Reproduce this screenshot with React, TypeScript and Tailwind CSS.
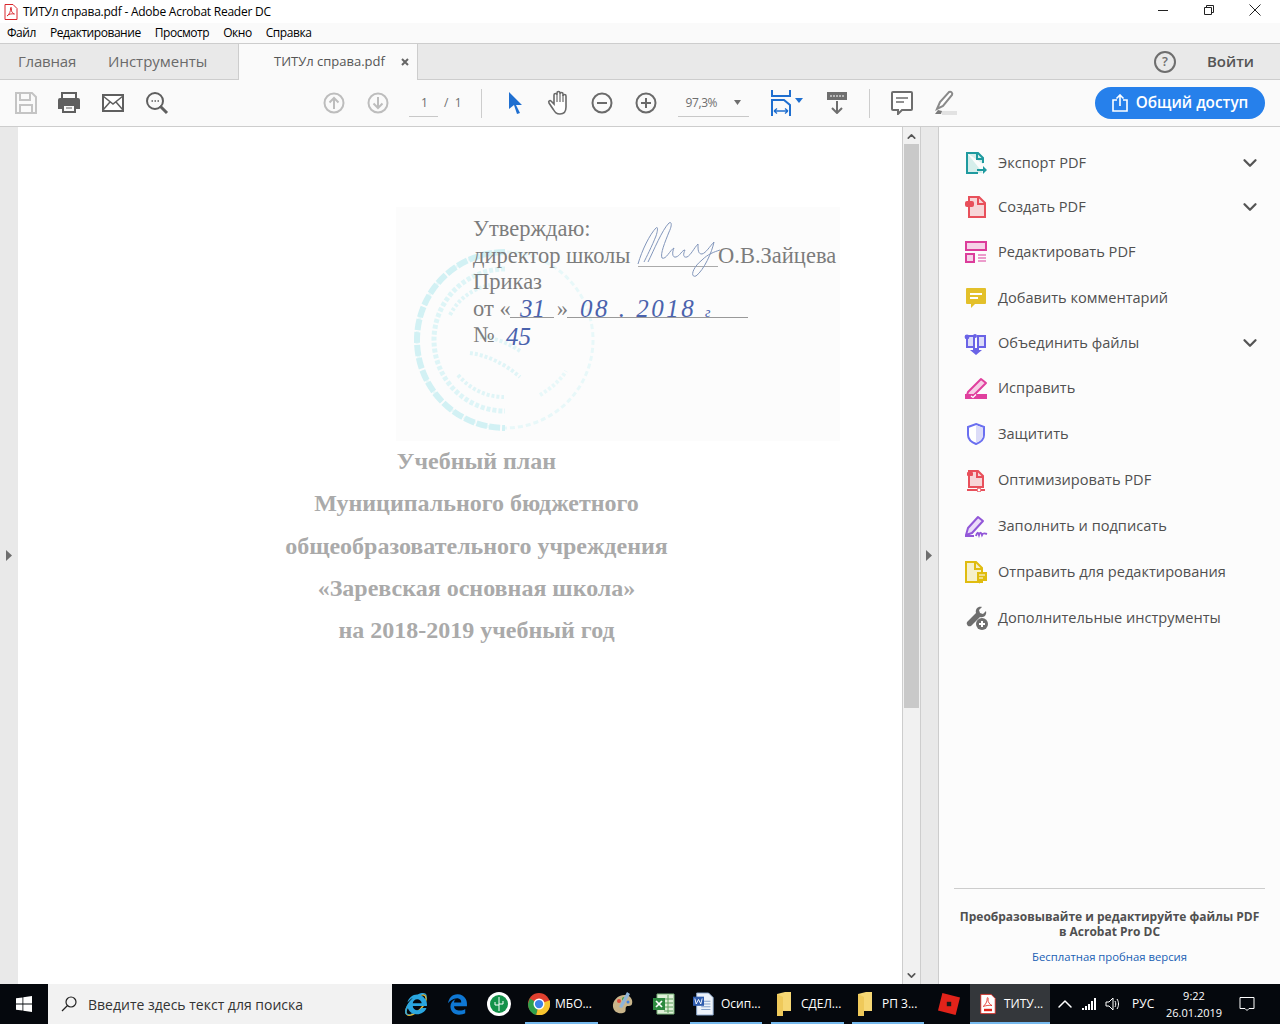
import { ChevronDown, ChevronUp } from 'lucide-react';
import { FaInternetExplorer, FaEdgeLegacy } from 'react-icons/fa';
import type { ReactNode } from 'react';

const uiFont = "font-['Open_Sans','Noto_Sans',sans-serif]";

function Ico({ children, w = 24, h = 24, className = '' }: { children: ReactNode; w?: number; h?: number; className?: string }) {
    return (
        <svg width={w} height={h} viewBox={`0 0 ${w} ${h}`} fill="none" className={className}>
            {children}
        </svg>
    );
}

const toolIcons: Record<string, ReactNode> = {
    export: (
        <Ico>
            <path d="M3 2h11l5 5v6M19 22H3V2" fill="#d6eeeb" />
            <path d="M14 22H3V2h11l5 5v5" stroke="#1f9a9f" strokeWidth="2" />
            <path d="M13 2v6h6" stroke="#1f9a9f" strokeWidth="2" />
            <path d="M13 18h6v-3l4 4-4 4v-3h-6z" fill="#1f9a9f" />
        </Ico>
    ),
    create: (
        <Ico>
            <path d="M5 7V2h10l6 6v14H5z" fill="#f7d6d8" stroke="#e8505b" strokeWidth="2" />
            <path d="M14 2v7h7" stroke="#e8505b" strokeWidth="2" />
            <rect x="1" y="6" width="9" height="6" rx="2" fill="#e8505b" />
        </Ico>
    ),
    edit: (
        <Ico>
            <rect x="2" y="2" width="20" height="8" fill="#f6d2e8" stroke="#dc3d9b" strokeWidth="2" />
            <rect x="2" y="14" width="8" height="8" fill="#f6d2e8" stroke="#dc3d9b" strokeWidth="2" />
            <path d="M14 15h8M14 18h8M14 21h8" stroke="#dc3d9b" strokeWidth="1.2" />
        </Ico>
    ),
    comment: (
        <Ico>
            <path d="M3 2h18a1 1 0 0 1 1 1v14a1 1 0 0 1-1 1H11l-4 4v-4H3a1 1 0 0 1-1-1V3a1 1 0 0 1 1-1z" fill="#e3c02a" />
            <path d="M6 8h12M6 12h8" stroke="#fff" strokeWidth="2" />
        </Ico>
    ),
    combine: (
        <Ico>
            <path d="M3 5h7v11H3zM14 5h7v11h-7z" fill="#dcdcf8" stroke="#6a63e6" strokeWidth="2" />
            <circle cx="3" cy="6" r="2.4" fill="#6a63e6" />
            <circle cx="11" cy="5" r="2" fill="#6a63e6" />
            <path d="M9 17h6v2h3l-6 5-6-5h3z" fill="#6a63e6" />
        </Ico>
    ),
    fix: (
        <Ico>
            <path d="M2 22l2-6L17 3l5 4L9 20z" fill="#f7cfe6" stroke="#e0409e" strokeWidth="2" strokeLinejoin="round" />
            <path d="M1 18h22v5H1z" fill="#e0409e" />
            <path d="M7 20l2 1.5 3-3" stroke="#fff" strokeWidth="1.3" />
        </Ico>
    ),
    protect: (
        <Ico>
            <path d="M12 2l8 3v8c0 4-3 7-8 9-5-2-8-5-8-9V5z" fill="#fff" stroke="#6a6ff0" strokeWidth="2" />
            <path d="M12 3l7 3v7c0 4-3 6-7 8z" fill="#dcdcf8" />
        </Ico>
    ),
    optimize: (
        <Ico>
            <path d="M5 3h9l5 5v11H5z" fill="#f7d6d8" stroke="#e8505b" strokeWidth="2" />
            <path d="M13 3v6h6" stroke="#e8505b" strokeWidth="2" />
            <rect x="3" y="4" width="6" height="4" rx="1" fill="#e8505b" />
            <path d="M3 22h18" stroke="#e8505b" strokeWidth="2" />
            <circle cx="15" cy="22" r="2" fill="#fff" stroke="#e8505b" />
        </Ico>
    ),
    sign: (
        <Ico>
            <path d="M2 21l2-7L14 3l5 4L8 19z" fill="#ebdcf9" stroke="#9257d8" strokeWidth="2" strokeLinejoin="round" />
            <path d="M1 22h9M12 22c1-4 2-4 3-1 1-3 2-3 3 0 1-2 2-2 5-1" stroke="#9257d8" strokeWidth="2" />
        </Ico>
    ),
    send: (
        <Ico>
            <path d="M2 2h10l6 6v14H2z" fill="#f6f0cc" stroke="#e0bc10" strokeWidth="2" />
            <path d="M11 2v7h7" stroke="#e0bc10" strokeWidth="2" />
            <path d="M13 12h10v9h-6l-2 3v-3h-2z" fill="#e0bc10" />
            <path d="M15 15h6M15 18h4" stroke="#fff" />
        </Ico>
    ),
    more: (
        <Ico>
            <path d="M18 1l-3 3 1 3 3 1 3-3c1 4-2 7-6 6L7 20a3 3 0 0 1-4-4l9-9c-1-4 2-7 6-6z" fill="#6e6e6e" />
            <circle cx="18" cy="18" r="6" fill="#6e6e6e" />
            <path d="M18 15v6M15 18h6" stroke="#fff" strokeWidth="2" />
        </Ico>
    ),
};

const tools = [
    { key: 'export', label: 'Экспорт PDF', expand: true, h: 'h-[44px]' },
    { key: 'create', label: 'Создать PDF', expand: true, h: 'h-[44px]' },
    { key: 'edit', label: 'Редактировать PDF', h: 'h-[46px]' },
    { key: 'comment', label: 'Добавить комментарий', h: 'h-[46px]' },
    { key: 'combine', label: 'Объединить файлы', expand: true, h: 'h-[44px]' },
    { key: 'fix', label: 'Исправить', h: 'h-[46px]' },
    { key: 'protect', label: 'Защитить', h: 'h-[46px]' },
    { key: 'optimize', label: 'Оптимизировать PDF', h: 'h-[46px]' },
    { key: 'sign', label: 'Заполнить и подписать', h: 'h-[46px]' },
    { key: 'send', label: 'Отправить для редактирования', h: 'h-[46px]' },
    { key: 'more', label: 'Дополнительные инструменты', h: 'h-[46px]' },
];

function TitleBar() {
    return (
        <div className="h-[23px] bg-white flex items-center pl-[4px] text-[12px] text-black">
            <svg width="14" height="16" viewBox="0 0 14 16" fill="none">
                <path d="M1 .5h8l4 4v11H1z" fill="#fff" stroke="#d9262c" />
                <path d="M3 12c2-1 4-5 3.500-8 0-1 1.500-1 1 1-.5 3 1 4 3 5-3-.5-6 0-7.500 2z" stroke="#d9262c" strokeWidth=".9" />
            </svg>
            <span className="ml-[5px] tracking-[-0.24px]">ТИТУл справа.pdf - Adobe Acrobat Reader DC</span>
            <div className="ml-auto mr-[2px] mb-[3px] flex items-center text-[#222]">
                <div className="w-[46px] flex justify-center">
                    <svg width="10" height="10"><path d="M0 5.500h10" stroke="#222" /></svg>
                </div>
                <div className="w-[46px] flex justify-center">
                    <svg width="10" height="10" fill="none" stroke="#222"><path d="M.5 2.500h7v7h-7zM2.500 2.500v-2h7v7h-2" /></svg>
                </div>
                <div className="w-[46px] flex justify-center">
                    <svg width="12" height="12" stroke="#222"><path d="M.5.500l11 11M11.500.500l-11 11" /></svg>
                </div>
            </div>
        </div>
    );
}

function MenuBar() {
    return (
        <div className="h-[20px] bg-[#fafafa] flex items-center pl-[7px] gap-[14px] text-[12px] tracking-[-0.45px] text-black">
            <span>Файл</span>
            <span>Редактирование</span>
            <span>Просмотр</span>
            <span>Окно</span>
            <span>Справка</span>
        </div>
    );
}

function TabBar() {
    return (
        <div className="h-[37px] bg-[#e9e9e9] border-y border-[#cdcdcd] flex text-[15px] text-[#6a6a6a] items-stretch">
            <div className="w-[90px] pl-[18px] flex items-center tracking-[-0.2px]">Главная</div>
            <div className="w-[131px] pl-[18px] flex items-center">Инструменты</div>
            <div className="w-[180px] ml-[17px] bg-[#fafafa] border-x border-[#cdcdcd] -mb-px flex items-center pl-[35px] pr-[8px] text-[13px] text-[#555]">
                <span>ТИТУл справа.pdf</span>
                <svg width="8" height="8" className="ml-auto" stroke="#666" strokeWidth="2"><path d="M1 1l6 6M7 1l-6 6" /></svg>
            </div>
            <div className="ml-auto flex items-center">
                <div className="w-[22px] h-[22px] rounded-full border-2 border-[#6e6e6e] flex items-center justify-center text-[13px] font-semibold text-[#6e6e6e]">?</div>
                <span className="ml-[31px] mr-[26px] font-semibold text-[#555]">Войти</span>
            </div>
        </div>
    );
}

function Toolbar() {
    return (
        <div className="h-[47px] bg-[#fafafa] border-b border-[#cdcdcd] flex items-center pl-[15px] text-[#6e6e6e]">
            <Ico w={22} h={22}>
                <path d="M1 1h16l4 4v16H1z" stroke="#c4c4c4" strokeWidth="2" />
                <path d="M5 2v6h10V2M5 20v-7h12v7" stroke="#c4c4c4" strokeWidth="2" />
            </Ico>
            <Ico w={24} h={22} className="ml-[20px]">
                <path d="M5 6V1h14v5" stroke="#5f5f5f" strokeWidth="2" />
                <path d="M3 6h18a2 2 0 0 1 2 2v9h-4v4H5v-4H1V8a2 2 0 0 1 2-2z" fill="#5f5f5f" />
                <path d="M7 14h10v5H7z" fill="#fafafa" />
                <path d="M9 16h6" stroke="#5f5f5f" />
            </Ico>
            <Ico w={22} h={18} className="ml-[21px]">
                <rect x="1" y="1" width="20" height="16" fill="#fff" stroke="#5f5f5f" strokeWidth="2" />
                <path d="M1 2l10 8 10-8M1 16l7-8M21 16l-7-8" stroke="#5f5f5f" strokeWidth="1.500" />
            </Ico>
            <Ico w={24} h={24} className="ml-[21px]">
                <circle cx="10" cy="10" r="8" stroke="#5f5f5f" strokeWidth="2" />
                <path d="M15 15l7 7" stroke="#5f5f5f" strokeWidth="3" />
                <path d="M6.500 10h1.500M9.500 10h1.500M12.500 10h1.500" stroke="#5f5f5f" strokeWidth="1.500" />
            </Ico>
            <Ico w={22} h={22} className="ml-[154px]">
                <circle cx="11" cy="11" r="9.500" stroke="#bdbdbd" strokeWidth="2" />
                <path d="M11 17V6M6.500 10.500L11 6l4.500 4.500" stroke="#bdbdbd" strokeWidth="2" />
            </Ico>
            <Ico w={22} h={22} className="ml-[22px]">
                <circle cx="11" cy="11" r="9.500" stroke="#bdbdbd" strokeWidth="2" />
                <path d="M11 5v11M6.500 11.500L11 16l4.500-4.500" stroke="#bdbdbd" strokeWidth="2" />
            </Ico>
            <div className="ml-[20px] w-[29px] h-[27px] border-b border-[#c8c8c8] flex items-center justify-center text-[12px] pl-[2px]">1</div>
            <span className="ml-[6px] text-[12px]">/&nbsp;&nbsp;1</span>
            <div className="ml-[19px] w-px h-[29px] bg-[#cdcdcd]" />
            <Ico w={16} h={22} className="ml-[25px]">
                <path d="M2 0l13 13H9l4 8-3 1-3-9-5 4z" fill="#1f6fd0" />
            </Ico>
            <Ico w={24} h={26} className="ml-[24px]">
                <path d="M6 19l-4-6c-1-2 1-3 2-2l3 3V5c0-2 3-2 3 0V3c0-2 3-2 3 0v1c0-2 3-2 3 0v2c0-2 3-2 3 0v11c0 4-2 7-6 7s-5-2-7-5z" fill="#fff" stroke="#6a6a6a" strokeWidth="1.600" />
                <path d="M10 5v7M13 4v8M16 5v7" stroke="#6a6a6a" strokeWidth="1.200" />
            </Ico>
            <Ico w={22} h={22} className="ml-[20px]">
                <circle cx="11" cy="11" r="9.500" stroke="#6a6a6a" strokeWidth="2" />
                <path d="M6 11h10" stroke="#6a6a6a" strokeWidth="2" />
            </Ico>
            <Ico w={22} h={22} className="ml-[22px]">
                <circle cx="11" cy="11" r="9.500" stroke="#6a6a6a" strokeWidth="2" />
                <path d="M6 11h10M11 6v10" stroke="#6a6a6a" strokeWidth="2" />
            </Ico>
            <div className="ml-[21px] w-[71px] h-[27px] border-b border-[#c8c8c8] flex items-center pl-[8px] text-[12px] tracking-[-0.4px]">
                97,3%
                <svg width="7" height="5" className="ml-auto mr-[8px]"><path d="M0 0h7L3.500 5z" fill="#6e6e6e" /></svg>
            </div>
            <Ico w={34} h={26} className="ml-[22px]">
                <path d="M1 0v6h18V0" stroke="#1f6fd0" strokeWidth="2" />
                <path d="M1 26V10h12l6 5v11" stroke="#1f6fd0" strokeWidth="2" />
                <path d="M3 21h14M3 21l3-2.500M3 21l3 2.500M17 21l-3-2.500M17 21l-3 2.500" stroke="#1f6fd0" strokeWidth="1.300" />
                <path d="M24 8h8l-4 5z" fill="#1f6fd0" />
            </Ico>
            <Ico w={24} h={22} className="ml-[20px]">
                <path d="M2 0h20v8H2z" fill="#6e6e6e" />
                <path d="M6 3v2M9 3v2M12 3v2M15 3v2M18 3v2" stroke="#fff" />
                <path d="M12 9v12M7 16l5 5 5-5" stroke="#6e6e6e" strokeWidth="2" />
            </Ico>
            <div className="ml-[20px] w-px h-[29px] bg-[#cdcdcd]" />
            <Ico w={22} h={24} className="ml-[21px]">
                <path d="M2 1h18a1 1 0 0 1 1 1v16a1 1 0 0 1-1 1h-9l-4 4v-4H2a1 1 0 0 1-1-1V2a1 1 0 0 1 1-1z" fill="#fff" stroke="#6e6e6e" strokeWidth="2" />
                <path d="M5 7h12M5 11h8" stroke="#6e6e6e" strokeWidth="1.500" />
            </Ico>
            <Ico w={26} h={26} className="ml-[20px]">
                <path d="M4 19l3-7L16 2c2-1 4 1 3 3l-9 11z" fill="#fff" stroke="#8a8a8a" strokeWidth="2" />
                <path d="M2 24l3-4 4 1-1 3z" fill="#7a7a7a" />
                <path d="M9 21h15v4H9z" fill="#e2e2e2" />
            </Ico>
            <button className="ml-auto mr-[15px] w-[170px] h-[32px] rounded-full bg-[#2680eb] text-white flex items-center justify-center font-semibold text-[15.300px]">
                <svg width="16" height="18" viewBox="0 0 16 18" fill="none" stroke="#fff" strokeWidth="1.600" className="mr-[8px]">
                    <path d="M5 6H1v11h14V6h-4M8 12V1M4.500 4.500L8 1l3.500 3.500" />
                </svg>
                <span className="-mt-[2px]">Общий доступ</span>
            </button>
        </div>
    );
}

function DocumentPage() {
    return (
        <div className="w-[884px] bg-white relative">
            <div className="absolute left-[378px] top-[80px] w-[444px] h-[234px] bg-[#fcfcfc]">
                <svg width="200" height="200" viewBox="0 0 200 200" className="absolute left-[14px] top-[38px]" fill="none">
                    <circle cx="95" cy="95" r="88" stroke="#e8f8f9" strokeWidth="3" strokeDasharray="5 3" />
                    <path d="M95 7A88 88 0 0 0 95 183" stroke="#d2f1f4" strokeWidth="6" strokeDasharray="11 2" />
                    <path d="M95 24A71 71 0 0 0 95 166" stroke="#def5f7" strokeWidth="5" strokeDasharray="4 2" />
                    <path d="M40 70c8-16 22-26 40-30M60 108c16 2 34 10 50 24M70 92c14 0 28 6 40 14M48 130c12 14 28 22 46 22" stroke="#e0f5f7" strokeWidth="4" strokeDasharray="3 2" />
                    <path d="M130 150c10-6 20-14 26-24" stroke="#e8f8f9" strokeWidth="4" strokeDasharray="3 2" />
                </svg>
                <div className="absolute left-[77px] top-[9px] font-['Liberation_Serif',serif] text-[22.500px] leading-[26.500px] text-[#7c7c7c] whitespace-nowrap">
                    <div>Утверждаю:</div>
                    <div>директор школы <span className="ml-[82px]">О.В.Зайцева</span></div>
                    <div>Приказ</div>
                    <div>от «<span className="ml-[46px]">»</span></div>
                    <div>№</div>
                </div>
                <div className="absolute left-[114px] top-[110px] w-[44px] h-px bg-[#999]" />
                <div className="absolute left-[171px] top-[110px] w-[181px] h-px bg-[#999]" />
                <div className="absolute left-[242px] top-[59px] w-[80px] h-px bg-[#aaa]" />
                <svg width="90" height="60" viewBox="0 0 90 60" className="absolute left-[240px] top-[13px]" fill="none" stroke="#8296bb" strokeWidth="1">
                    <path d="M2 44C6 30 14 14 20 8c2-2 2 2 0 8-4 10-10 22-12 26" />
                    <path d="M12 42c6-12 14-32 21-39 3-2 3 3 0 9-4 10-9 22-7 26 4 2 8-8 12-10-2 4-2 10 2 9 4-1 6-7 9-7-2 4-2 8 2 7 4-2 7-9 11-13 0 6 0 10 4 10 4-1 8-8 12-12-2 10-10 28-18 34-6 2-4-8 6-16 6-6 12-8 18-10" />
                </svg>
                <div className="absolute left-[124px] top-[83px] text-[#4a62ad] italic font-['Liberation_Serif',serif] text-[25px] whitespace-nowrap">31</div>
                <div className="absolute left-[184px] top-[83px] text-[#4a62ad] italic font-['Liberation_Serif',serif] text-[25px] tracking-[2.500px] whitespace-nowrap">08 . 2018 <span className="text-[14px]">г</span></div>
                <div className="absolute left-[110px] top-[111px] text-[#4a62ad] italic font-['Liberation_Serif',serif] text-[25px] whitespace-nowrap">45</div>
            </div>
            <div className="absolute left-0 top-[313px] w-[917px] text-center font-['Liberation_Serif',serif] font-bold text-[24px] leading-[42.300px] text-[#aaaaaa]">
                <div>Учебный план</div>
                <div>Муниципального бюджетного</div>
                <div>общеобразовательного учреждения</div>
                <div>«Заревская основная школа»</div>
                <div>на 2018-2019 учебный год</div>
            </div>
        </div>
    );
}

function ToolsPanel() {
    return (
        <div className="flex-1 bg-[#fcfcfc] flex flex-col pt-[14px] pl-[15px] pr-[15px] pb-[18px]">
            <div className="flex flex-col">
                {tools.map((t) => (
                    <div key={t.key} className={`${t.h} flex items-center text-[14.600px] text-[#505050]`}>
                        <span className="w-[24px] ml-[10px] flex shrink-0">{toolIcons[t.key]}</span>
                        <span className="ml-[10px]">{t.label}</span>
                        {t.expand && <ChevronDown size={22} strokeWidth={2.500} className="ml-auto mr-[4px] text-[#555]" />}
                    </div>
                ))}
            </div>
            <div className="mt-auto border-t border-[#cdcdcd] pt-[20px] text-center">
                <div className="text-[12px] leading-[15px] font-bold text-[#505050] whitespace-nowrap">
                    Преобразовывайте и редактируйте файлы PDF
                    <br />в Acrobat Pro DC
                </div>
                <div className="mt-[10px] text-[11.300px] text-[#1a5fb4]">Бесплатная пробная версия</div>
            </div>
        </div>
    );
}

function TaskItem({ children, label, active, className }: { children: ReactNode; label?: string; active?: boolean; className: string }) {
    return (
        <div className={`${className} relative flex items-center ${active ? 'bg-[#34373b]' : ''}`}>
            {children}
            {label && <span className="whitespace-nowrap">{label}</span>}
            {label && <div className="absolute left-0 right-0 bottom-0 h-[2px] bg-[#76b9ed]" />}
        </div>
    );
}

function Folder({ className }: { className?: string }) {
    return (
        <svg width="14" height="24" viewBox="0 0 14 24" className={className}>
            <path d="M0 2l8-2h6v19H6l-6 5z" fill="#f6d774" />
            <path d="M0 2l6 3v19H0z" fill="#efc95a" />
        </svg>
    );
}

function TaskIcons() {
    return (
        <div className="flex items-stretch">
            <TaskItem className="w-[43px] pl-[13px]">
                <span className="relative flex">
                    <svg width="24" height="24" viewBox="0 0 24 24" fill="none" className="absolute -left-[1px] top-0">
                        <ellipse cx="12" cy="12" rx="13" ry="6" transform="rotate(-45 12 12)" stroke="#e0b93a" strokeWidth="1.500" />
                    </svg>
                    <FaInternetExplorer size={22} className="relative text-[#2aa6e0]" />
                </span>
            </TaskItem>
            <TaskItem className="w-[42px] pl-[12px]">
                <FaEdgeLegacy size={21} className="text-[#0f78d4]" />
            </TaskItem>
            <TaskItem className="w-[48px] pl-[10px]">
                <svg width="24" height="24" viewBox="0 0 24 24">
                    <circle cx="12" cy="12" r="12" fill="#fff" />
                    <circle cx="12" cy="12" r="9" fill="#14924a" />
                    <path d="M12 5v14M8 10v3h4M16 9v3h-4" stroke="#fff" fill="none" />
                </svg>
            </TaskItem>
            <TaskItem className="w-[73px] pl-[3px] gap-[5px]" label="МБО...">
                <svg width="22" height="22" viewBox="0 0 24 24">
                    <circle cx="12" cy="12" r="12" fill="#e0402f" />
                    <path d="M12 12L2 6 0 12a12 12 0 0 0 9 12z" fill="#2fa04b" />
                    <path d="M12 12l-3 12a12 12 0 0 0 15-12V8z" fill="#f7c52e" />
                    <circle cx="12" cy="12" r="6" fill="#fff" />
                    <circle cx="12" cy="12" r="4.500" fill="#3c82e8" />
                </svg>
            </TaskItem>
            <TaskItem className="w-[54px] pl-[12px]">
                <svg width="24" height="24" viewBox="0 0 24 24">
                    <path d="M3 15C2 8 9 2 16 3c5 1 7 5 6 9-1 3-5 1-6 3s1 5-3 6c-5 1-9-1-10-6z" fill="#c9b58b" />
                    <circle cx="9" cy="9" r="2" fill="#e04a3a" />
                    <circle cx="14" cy="7" r="2" fill="#45a04a" />
                    <circle cx="18" cy="10" r="1.500" fill="#3c7fe0" />
                    <path d="M17 0l3 2-8 14-3-1z" fill="#8fb4d8" />
                </svg>
            </TaskItem>
            <TaskItem className="w-[38px]">
                <svg width="24" height="24" viewBox="0 0 24 24">
                    <path d="M5 2h17v20H5z" fill="#dff0d8" stroke="#7ab57a" />
                    <path d="M12 7h9M12 11h9M12 15h9M12 19h9M16 3v18" stroke="#5da05d" />
                    <path d="M1 6h12v12H1z" fill="#2c8a3f" />
                    <path d="M4 9l6 6M10 9l-6 6" stroke="#fff" strokeWidth="1.700" />
                </svg>
            </TaskItem>
            <TaskItem className="w-[72px] pl-[3px] gap-[6px]" label="Осип...">
                <svg width="22" height="24" viewBox="0 0 24 26">
                    <path d="M4 1h13l5 5v19H4z" fill="#eef3fa" stroke="#8aa7cf" />
                    <path d="M9 10h10M9 13h10M9 16h10M9 19h10" stroke="#7b9ac6" />
                    <path d="M0 5h12v10H0z" fill="#2f5cae" />
                    <path d="M2 7l1.500 6L6 8l2.500 5L10 7" stroke="#fff" fill="none" />
                </svg>
            </TaskItem>
            <TaskItem className="w-[73px] ml-[9px] pl-[6px] gap-[10px]" label="СДЕЛ...">
                <Folder />
            </TaskItem>
            <TaskItem className="w-[72px] ml-[8px] pl-[6px] gap-[10px]" label="РП 3...">
                <Folder />
            </TaskItem>
            <TaskItem className="w-[46px] pl-[14px]">
                <svg width="22" height="22" viewBox="0 0 20 20">
                    <path d="M4 0l16 4-4 16L0 16z" fill="#e2231a" />
                    <rect x="8" y="8" width="4" height="4" fill="#1a1a1a" />
                </svg>
            </TaskItem>
            <TaskItem className="w-[80px] pl-[10px] gap-[8px]" label="ТИТУ..." active>
                <svg width="16" height="22" viewBox="0 0 20 24">
                    <path d="M1 0h13l5 5v19H1z" fill="#fff" stroke="#e2231a" />
                    <path d="M4 15c3-2 5-6 5-10 0-2 2-1 1 2 0 3 2 5 5 7-3-1-7 0-11 1z" stroke="#e2231a" fill="none" />
                    <path d="M5 18h10v3H5z" fill="#e2231a" />
                </svg>
            </TaskItem>
        </div>
    );
}

function Taskbar() {
    return (
        <div className="h-[40px] bg-[#05080d] flex items-stretch text-[12px] text-white font-['Open_Sans',sans-serif]">
            <div className="w-[48px] flex items-center pl-[16px]">
                <svg width="16" height="16" viewBox="0 0 16 16" fill="#fff">
                    <path d="M0 2.300l6.500-.9v6.200H0zM7.300 1.300L16 0v7.600H7.300zM0 8.400h6.500v6.200L0 13.700zM7.300 8.400H16V16l-8.700-1.200z" />
                </svg>
            </div>
            <div className="w-[344px] bg-[#f2f2f2] flex items-center pl-[13px] text-[14px] text-[#333]">
                <svg width="16" height="16" viewBox="0 0 16 16" fill="none" stroke="#222" strokeWidth="1.200">
                    <circle cx="10" cy="6" r="5" />
                    <path d="M6.500 9.500L1 15" />
                </svg>
                <span className="ml-[11px]">Введите здесь текст для поиска</span>
            </div>
            <TaskIcons />
            <div className="flex items-center">
                <ChevronUp size={24} strokeWidth={1.500} className="text-white ml-[3px]" />
                <svg width="14" height="12" viewBox="0 0 14 12" fill="#fff" className="ml-[5px]">
                    <path d="M0 10h2v2H0zM3 8h2v4H3zM6 6h2v6H6zM9 3h2v9H9zM12 0h2v12h-2z" />
                </svg>
                <svg width="16" height="14" viewBox="0 0 16 14" fill="none" stroke="#fff" className="ml-[9px]">
                    <path d="M1 5h3l4-4v12l-4-4H1zM10 4c1 2 1 4 0 6M12 2c2 3 2 7 0 10" />
                </svg>
                <span className="ml-[11px] w-[28px]">РУС</span>
                <div className="ml-[2px] w-[64px] text-center leading-[17px] text-[11px]">
                    <div>9:22</div>
                    <div>26.01.2019</div>
                </div>
                <svg width="16" height="16" viewBox="0 0 16 16" fill="none" stroke="#fff" className="ml-[13px]">
                    <path d="M1 1.500h14v11h-5l-2 2-2-2H1z" />
                </svg>
            </div>
        </div>
    );
}

export default function App() {
    return (
        <div className={`w-[1280px] h-[1024px] overflow-hidden flex flex-col bg-white ${uiFont}`}>
            <TitleBar />
            <MenuBar />
            <TabBar />
            <Toolbar />
            <div className="h-[857px] flex items-stretch">
                <div className="w-[18px] bg-[#e9e9e9] flex items-center">
                    <svg width="7" height="11" className="ml-[6px]"><path d="M0 0l6 5.500-6 5.500z" fill="#6e6e6e" /></svg>
                </div>
                <DocumentPage />
                <div className="w-[18px] bg-[#f1f1f1] border-l border-[#cdcdcd] flex flex-col items-center">
                    <ChevronUp size={13} strokeWidth={3} className="text-[#555] mt-[3px]" />
                    <div className="w-[15px] h-[564px] mt-px bg-[#c9c9c9]" />
                    <ChevronDown size={13} strokeWidth={3} className="text-[#555] mt-auto mb-[2px]" />
                </div>
                <div className="w-[19px] bg-[#e9e9e9] border-x border-[#cdcdcd] flex items-center">
                    <svg width="7" height="11" className="ml-[5px]"><path d="M0 0l6 5.500-6 5.500z" fill="#6e6e6e" /></svg>
                </div>
                <ToolsPanel />
            </div>
            <Taskbar />
        </div>
    );
}
